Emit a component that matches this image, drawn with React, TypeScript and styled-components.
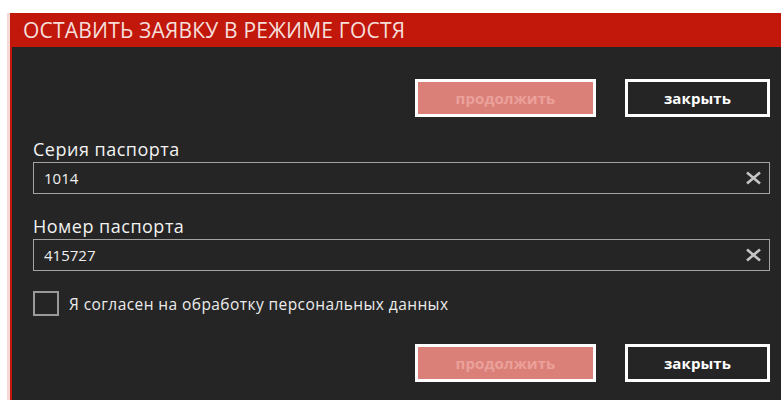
import React, { useState } from 'react';
import styled, { createGlobalStyle } from 'styled-components';

const GlobalStyle = createGlobalStyle`
  html, body {
    margin: 0;
    background: #ffffff;
    font-family: 'Open Sans', 'Noto Sans', sans-serif;
  }
`;

const Page = styled.div`
  padding: 13px 0 0 7px;
  height: 387px;
  overflow: hidden;
`;

const Shell = styled.div`
  border-left: 3px solid #f7d9d8;
  height: 100%;
`;

const Dialog = styled.section`
  border-left: 2px solid #c4170b;
  background: #252525;
  height: 100%;
`;

const Header = styled.header`
  background: #c1180b;
  height: 34px;
  margin-left: -2px;
  padding-left: 13px;
  display: flex;
  align-items: center;
`;

const Title = styled.h1`
  margin: 0;
  font-size: 21px;
  font-weight: 400;
  color: #f6dfdb;
  letter-spacing: 0.2px;
`;

const Body = styled.div`
  padding: 32px 11px 0 21px;
`;

const Actions = styled.div<{ $top?: number }>`
  display: flex;
  justify-content: flex-end;
  gap: 29px;
  margin-top: ${(p) => p.$top ?? 0}px;
`;

const Button = styled.button<{ $primary?: boolean }>`
  height: 38px;
  width: ${(p) => (p.$primary ? 181 : 145)}px;
  box-sizing: border-box;
  border: 3px solid #ffffff;
  background: ${(p) => (p.$primary ? '#db8078' : '#252525')};
  color: ${(p) => (p.$primary ? '#eba19b' : '#ffffff')};
  font-family: inherit;
  font-size: 15px;
  font-weight: 700;
  letter-spacing: 0.1px;
  cursor: pointer;
  padding: 0;
`;

const Field = styled.div<{ $top: number }>`
  margin-top: ${(p) => p.$top}px;
`;

const Label = styled.label`
  display: block;
  color: #f2f2f2;
  font-size: 18px;
  line-height: 20px;
  letter-spacing: 0.5px;
  margin-bottom: 3px;
`;

const InputBox = styled.div`
  position: relative;
  height: 32px;
  box-sizing: border-box;
  border: 1.5px solid #a3a3a3;
`;

const Input = styled.input`
  width: 100%;
  height: 100%;
  box-sizing: border-box;
  border: none;
  outline: none;
  background: transparent;
  color: #f0f0f0;
  font-family: inherit;
  font-size: 15px;
  padding: 0 40px 0 10px;
`;

const Clear = styled.button`
  position: absolute;
  right: 7px;
  top: 50%;
  transform: translateY(-50%);
  width: 18px;
  height: 16px;
  padding: 0;
  border: none;
  background: none;
  display: flex;
  align-items: center;
  justify-content: center;
  cursor: pointer;
`;

const Consent = styled.label`
  display: flex;
  align-items: center;
  gap: 10px;
  margin-top: 20px;
  color: #ececec;
  font-size: 15.5px;
  letter-spacing: 0.42px;
  cursor: pointer;
`;

const Box = styled.span`
  width: 22px;
  height: 21px;
  border: 2px solid #9a9a9a;
  flex: none;
`;

const CrossIcon = () => (
  <svg width="17" height="14" viewBox="0 0 17 14">
    <path d="M2 1.5 L15 12.5 M15 1.5 L2 12.5" stroke="#c4c4c4" strokeWidth="2.6" />
  </svg>
);

const PassportField = ({ label, value, top }: { label: string; value: string; top: number }) => {
  const [text, setText] = useState(value);
  return (
    <Field $top={top}>
      <Label>{label}</Label>
      <InputBox>
        <Input value={text} onChange={(e) => setText(e.target.value)} />
        <Clear type="button" onClick={() => setText('')}>
          <CrossIcon />
        </Clear>
      </InputBox>
    </Field>
  );
};

export default function App() {
  return (
    <Page>
      <GlobalStyle />
      <Shell>
        <Dialog>
          <Header>
            <Title>ОСТАВИТЬ ЗАЯВКУ В РЕЖИМЕ ГОСТЯ</Title>
          </Header>
          <Body>
            <Actions>
              <Button $primary>продолжить</Button>
              <Button>закрыть</Button>
            </Actions>
            <PassportField label="Серия паспорта" value="1014" top={22} />
            <PassportField label="Номер паспорта" value="415727" top={22} />
            <Consent>
              <Box />
              Я согласен на обработку персональных данных
            </Consent>
            <Actions $top={28}>
              <Button $primary>продолжить</Button>
              <Button>закрыть</Button>
            </Actions>
          </Body>
        </Dialog>
      </Shell>
    </Page>
  );
}
